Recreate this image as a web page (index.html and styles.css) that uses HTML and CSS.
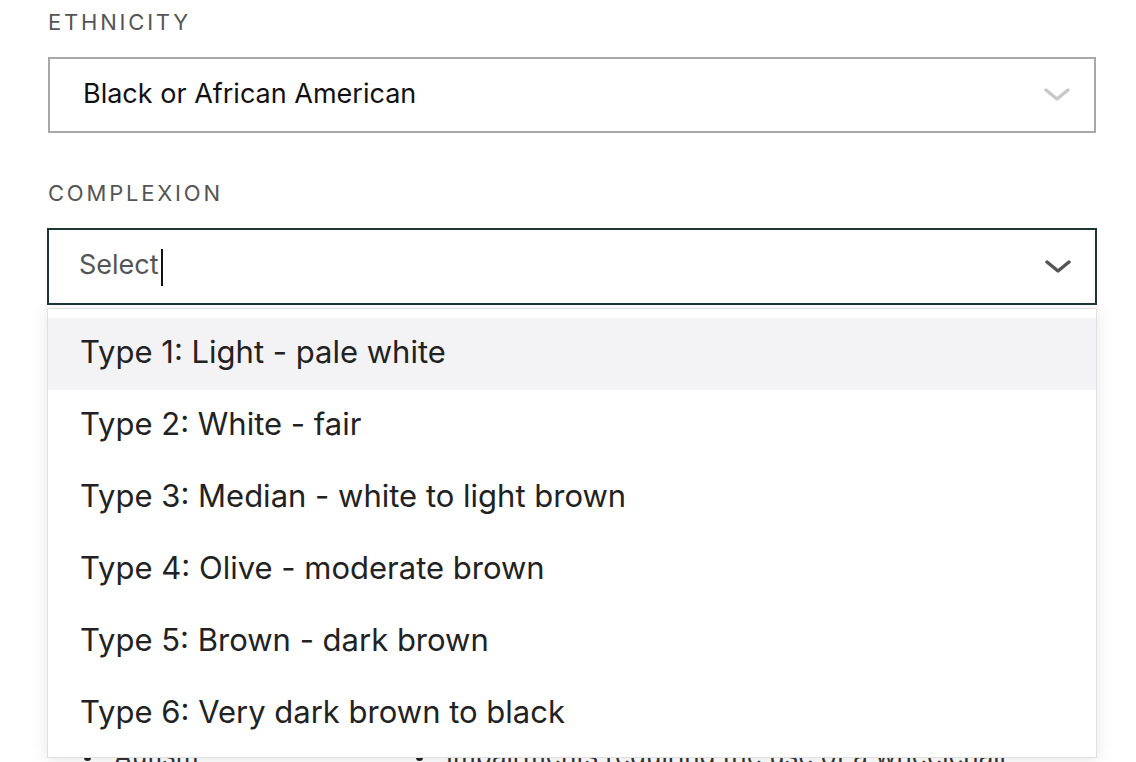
FILE: index.html
```html
<!DOCTYPE html>
<html>
<head>
<meta charset="utf-8">
<link rel="stylesheet" href="styles.css">
</head>
<body>
<div class="form">
  <div class="field">
    <div class="label">ETHNICITY</div>
    <div class="select">
      <span class="value">Black or African American</span>
      <svg class="chev light" width="26" height="14" viewBox="0 0 26 14"><path d="M2 2 L13 11 L24 2" fill="none" stroke="currentColor" stroke-width="3.5" stroke-linecap="round" stroke-linejoin="round"/></svg>
    </div>
  </div>
  <div class="field">
    <div class="label">COMPLEXION</div>
    <div class="select-wrap">
      <div class="select focused">
        <span class="placeholder">Select<span class="caret"></span></span>
        <svg class="chev dark" width="26" height="14" viewBox="0 0 26 14"><path d="M2 2 L13 11 L24 2" fill="none" stroke="currentColor" stroke-width="3.5" stroke-linecap="round" stroke-linejoin="round"/></svg>
      </div>
      <ul class="menu">
        <li class="opt active">Type 1: Light - pale white</li>
        <li class="opt">Type 2: White - fair</li>
        <li class="opt">Type 3: Median - white to light brown</li>
        <li class="opt">Type 4: Olive - moderate brown</li>
        <li class="opt">Type 5: Brown - dark brown</li>
        <li class="opt">Type 6: Very dark brown to black</li>
      </ul>
    </div>
  </div>
  <div class="under">
    <ul class="bullets">
      <li>Autism</li>
      <li>Impairments requiring the use of a wheelchair</li>
    </ul>
  </div>
</div>
</body>
</html>
```
FILE: styles.css
```css
* { box-sizing: border-box; }
html, body { margin: 0; padding: 0; background: #fff; overflow: hidden; }
body { font-family: Inter, "Liberation Sans", sans-serif; color: #1c1c1c; width: 1136px; height: 762px; }
.form { padding: 9px 40px 0 48px; }
.field { margin-bottom: 47px; }
.label {
  font-size: 22px;
  letter-spacing: 2.8px;
  color: #555;
  line-height: 26px;
  margin-bottom: 22px;
}
.select {
  height: 76px;
  border: 2px solid #a8a8a8;
  display: flex;
  align-items: center;
  justify-content: space-between;
  padding: 0 24px 4px 33px;
  background: #fff;
}
.value { font-size: 27px; color: #111; }
.chev { margin-top: 4px; }
.chev.light { color: #c8c8c8; }
.chev.dark { color: #555; }
.select-wrap { position: relative; margin-left: -1px; margin-right: -1px; }
.select.focused { border-color: #1e3535; height: 77px; padding-left: 30px; }
.placeholder { font-size: 27px; color: #555; display: flex; align-items: center; }
.caret { display: inline-block; width: 2px; height: 37px; background: #111; margin-left: 2px; margin-top: 6px; }
.menu {
  position: absolute;
  left: 0; right: 0;
  top: 80px;
  margin: 0;
  padding: 9px 0 7px;
  list-style: none;
  background: #fff;
  border: 1px solid #e0e0e0;
  box-shadow: 0 2px 16px rgba(0,0,0,0.10);
  z-index: 2;
}
.opt {
  height: 72px;
  display: flex;
  align-items: center;
  padding: 0 0 6px 32px;
  font-size: 31px;
  color: #222;
}
.opt.active { background: #f3f3f5; }
.under { padding-top: 388px; }
.bullets {
  margin: 0;
  padding: 0 0 0 66px;
  display: grid;
  grid-template-columns: 332px 1fr;
  font-size: 26px;
  color: #333;
  list-style: none;
}
.bullets li { position: relative; line-height: 32px; }
.bullets li::before { content: ""; position: absolute; left: -30px; top: 14px; width: 7px; height: 7px; border-radius: 50%; background: #222; }
```
